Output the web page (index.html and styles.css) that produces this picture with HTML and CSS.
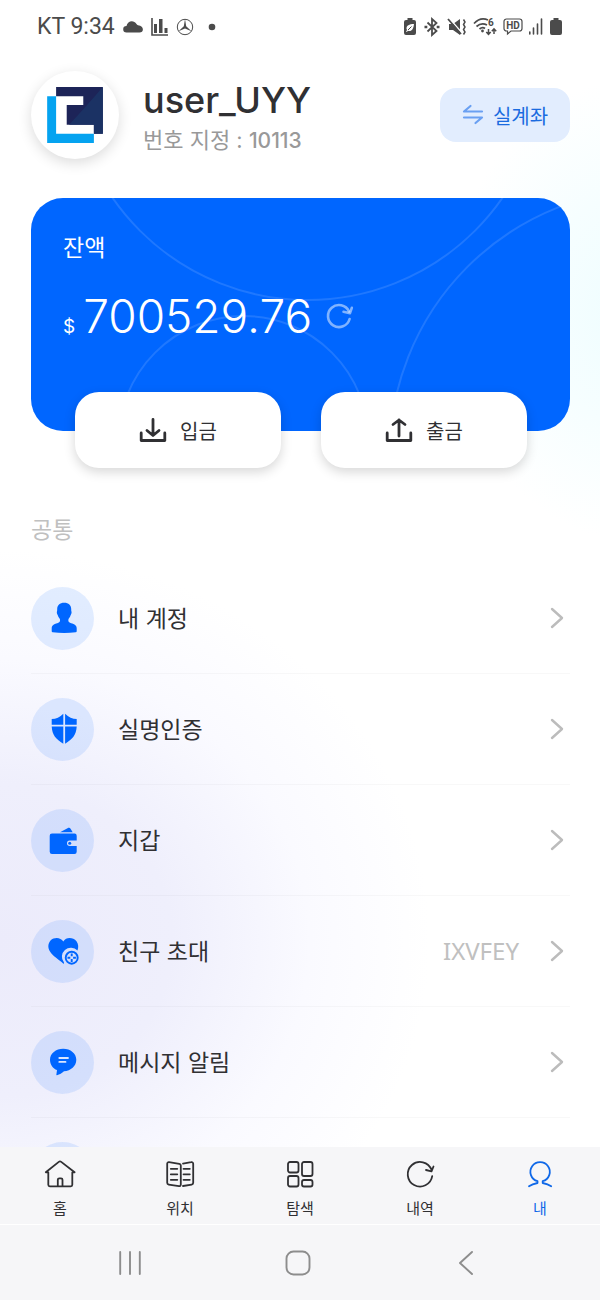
FILE: index.html
```html
<!DOCTYPE html>
<html lang="ko">
<head>
<meta charset="utf-8">
<meta name="viewport" content="width=device-width, initial-scale=1">
<title>내 계정</title>
<link rel="stylesheet" href="styles.css">
</head>
<body>
<div class="app">
  <header class="status">
    <div class="status-left">
      <span class="clock">KT 9:34</span>
      <svg width="20" height="20" viewBox="0 0 20 20" aria-hidden="true"><path fill="currentColor" d="M3.500 15.500a3.300 3.300 0 0 1 0-6.600C4.500 4 10.500 2.500 13.500 7c.4.600.8 1.100 1.500 1.300 6.500.7 6 7.200 1.500 7.200z"/></svg>
      <svg width="17" height="20" viewBox="0 0 17 20" aria-hidden="true"><path d="M1 1v17h16" fill="none" stroke="currentColor" stroke-width="1.600"/><path fill="currentColor" d="M3 7h3v9H3zM8 2h3.500v14H8zM13.500 11h3v5h-3z"/></svg>
      <svg width="18" height="20" viewBox="0 0 18 20" aria-hidden="true"><circle cx="9" cy="10" r="7.700" fill="none" stroke="currentColor" stroke-width="1"/><path fill="currentColor" d="M9 2l1.200 7.300 5.300 4.900L9 11.400l-6.500 2.800 5.300-4.900z"/></svg>
      <svg width="20" height="20" viewBox="0 0 20 20" aria-hidden="true"><circle cx="10" cy="10" r="3.300" fill="currentColor"/></svg>
    </div>
    <div class="status-right">
      <svg width="14" height="20" viewBox="0 0 14 20" aria-hidden="true"><path fill="currentColor" d="M4.500 1h5v2H11a2 2 0 0 1 2 2v11a2 2 0 0 1-2 2H3a2 2 0 0 1-2-2V5a2 2 0 0 1 2-2h1.500z"/><path fill="#fff" d="M11 7c-5 0-7.500 1.500-7.500 4.500 0 .6.200 1.200.6 1.600L3 14.500l.8.600 1.200-1.300c3.500 1.200 5.500-1.800 6-6.800z"/><path d="M5 13l3.500-3.500" stroke="currentColor" stroke-width="1"/></svg>
      <svg width="18" height="20" viewBox="0 0 18 20" aria-hidden="true" fill="none" stroke="currentColor" stroke-width="1.800"><path d="M4.500 5.500l9 8.500L9 18V2l4.500 4-9 8.500"/><path d="M1.500 10h2.800M13.700 10h2.800" stroke-width="2.400"/></svg>
      <svg width="20" height="20" viewBox="0 0 20 20" aria-hidden="true"><path fill="currentColor" d="M2 7h4l7-5v16l-7-5H2z"/><path d="M2 1l13 15" stroke="#fff" stroke-width="1.500"/><path d="M1 2l13 15" stroke="currentColor" stroke-width="1.800"/><path d="M16.500 2.500l1.500 2.500-1.500 2.500 1.500 2.500-1.500 2.500 1.500 2.500-1.500 2.500" fill="none" stroke="currentColor" stroke-width="1.500"/></svg>
      <svg width="24" height="20" viewBox="0 0 24 20" aria-hidden="true"><g fill="none" stroke="currentColor" stroke-width="1.700"><path d="M1 6.500Q7.500-.5 15 3M3.500 9.500Q8.500 5 14 8M6.500 12Q9.500 9.500 12 11.500"/><path d="M15.500 12v5M13.300 15l2.200 2.400 2.200-2.400M21 17v-5M18.800 14.200L21 11.800l2.200 2.400" stroke-width="1.500"/></g><circle cx="9.500" cy="14" r="1.400" fill="currentColor"/><text x="15" y="9" class="tiny">6</text></svg>
      <svg width="20" height="20" viewBox="0 0 20 20" aria-hidden="true"><path d="M3.500 2h13A2.500 2.500 0 0 1 19 4.500v7a2.500 2.500 0 0 1-2.500 2.500H8l-3.500 3v-3h-1A2.500 2.500 0 0 1 1 11.500v-7A2.500 2.500 0 0 1 3.500 2z" fill="none" stroke="currentColor" stroke-width="1.200"/><text x="10" y="12" text-anchor="middle" class="tiny">HD</text></svg>
      <svg width="14" height="20" viewBox="0 0 14 20" aria-hidden="true"><path d="M.8 17v-2M4.500 17v-6M8.500 17V7M12.500 17V2" stroke="currentColor" stroke-width="1.600" stroke-linecap="round"/></svg>
      <svg width="14" height="20" viewBox="0 0 14 20" aria-hidden="true"><path fill="currentColor" d="M4.500 1h5v2H11a2 2 0 0 1 2 2v11a2 2 0 0 1-2 2H3a2 2 0 0 1-2-2V5a2 2 0 0 1 2-2h1.500z"/></svg>
    </div>
  </header>

  <main class="content">
    <section class="profile">
      <div class="avatar">
        <svg width="56" height="56" viewBox="141 262 168 169" role="img" aria-label="로고">
          <path fill="#1d2458" d="M168 262h141v141h-27v-27h-82v-60h50v-26h-82z"/>
          <path fill="#1b3264" d="M309 262v141h-27v-27h-75Q255 325 309 262z"/>
          <path fill="#05a3f0" d="M141 290h27v113h114v28H141z"/>
        </svg>
      </div>
      <div class="identity">
        <h1 class="name">user_UYY</h1>
        <p class="number">번호 지정 : <span class="digits">10113</span></p>
      </div>
      <button class="switch" type="button">
        <svg width="22" height="22" viewBox="0 0 22 22" aria-hidden="true" fill="none" stroke="currentColor" stroke-width="2.200" stroke-linecap="round" stroke-linejoin="round"><path d="M8.500 2L2 7.500h18M2 13.500h18L13.500 19"/></svg>
        <span>실계좌</span>
      </button>
    </section>

    <section class="card">
      <svg class="card-lines" viewBox="0 0 540 233" preserveAspectRatio="xMidYMid slice" aria-hidden="true"><circle cx="277" cy="-135" r="237"/><circle cx="213" cy="243" r="125"/><circle cx="625" cy="257" r="266"/></svg>
      <h2 class="card-title">잔액</h2>
      <div class="balance">
        <span class="currency">$</span><span class="amount">700529.76</span>
        <button class="refresh" type="button" aria-label="새로고침">
          <svg width="32" height="32" viewBox="0 0 32 32" fill="none" stroke="currentColor" stroke-width="2.600" stroke-linecap="round" stroke-linejoin="round"><path d="M26.600 19A11 11 0 1 1 26 11.500"/><path d="M20.500 11.800l6.500 1.400 1.800-5.400"/></svg>
        </button>
      </div>
    </section>

    <div class="actions">
      <button class="action" type="button">
        <svg width="28" height="28" viewBox="0 0 28 28" aria-hidden="true" fill="none" stroke="currentColor" stroke-width="2.800" stroke-linecap="round" stroke-linejoin="round"><path d="M2.200 17v7.500h23.600V17M14 3.500V19M8 14.500l6 5 6-5"/></svg>
        <span>입금</span>
      </button>
      <button class="action" type="button">
        <svg width="28" height="28" viewBox="0 0 28 28" aria-hidden="true" fill="none" stroke="currentColor" stroke-width="2.800" stroke-linecap="round" stroke-linejoin="round"><path d="M2.200 17v7.500h23.600V17M14 20V4M8 8.500L14 4l6 4.500"/></svg>
        <span>출금</span>
      </button>
    </div>

    <h2 class="section-title">공통</h2>
    <nav class="menu" aria-label="공통">
      <a class="row" href="#account">
        <span class="chip"><svg width="32" height="32" viewBox="0 0 32 32" aria-hidden="true"><path fill="currentColor" d="M17.200.7c4.500 0 7 2.600 7 6.300 0 1 0 2 .3 2.800.4 1.700-.6 2.700-1 3.700-.6 1.800-1.300 2.700-2 3.500-.3 1.800-.3 3 1.500 3.800 3 1 6.700 2 6.700 5.400v3c0 .6-.4.900-1 1-7.500 1-15.500 1-23 0-.6-.1-1-.4-1-1v-3c0-3.400 3.700-4.400 6.700-5.400 1.800-.8 1.800-2 1.500-3.800-.7-.8-1.400-1.700-2-3.500-.4-1-1.400-2-1-3.700.3-.8.300-1.800.3-2.800 0-3.700 2.500-6.300 7-6.300z"/></svg></span>
        <span class="label">내 계정</span>
        <svg class="chevron" width="14" height="22" viewBox="0 0 14 22" aria-hidden="true"><path d="M2 2l10 9-10 9"/></svg>
      </a>
      <a class="row" href="#verify">
        <span class="chip"><svg width="32" height="32" viewBox="0 0 32 32" aria-hidden="true"><path fill="currentColor" d="M16.300.7v11H4.700V6C9 6 13 4 16.300.7zM18.100.7C21.500 4 25.500 6 29.700 6v5.700H18.100zM4.700 13.600h11.600v17.100C9 26.500 5.200 22 4.700 13.600zM18.100 13.600h11.600c-.5 8.400-4.300 12.900-11.600 17.100z"/></svg></span>
        <span class="label">실명인증</span>
        <svg class="chevron" width="14" height="22" viewBox="0 0 14 22" aria-hidden="true"><path d="M2 2l10 9-10 9"/></svg>
      </a>
      <a class="row" href="#wallet">
        <span class="chip"><svg width="32" height="32" viewBox="0 0 32 32" aria-hidden="true"><path fill="currentColor" d="M13 8.300l7.500-4c1.400-.8 2.500-.6 3.200.6l2 3.400zM5 9.500h22.500a2.200 2.200 0 0 1 2.200 2.200v4.900h-7a2.700 2.700 0 0 0 0 5.400h7v5.800a2.200 2.200 0 0 1-2.200 2.200H5a2.300 2.300 0 0 1-2.300-2.200v-16A2.300 2.300 0 0 1 5 9.500z"/><circle cx="22.700" cy="19.300" r="1.500" fill="currentColor"/></svg></span>
        <span class="label">지갑</span>
        <svg class="chevron" width="14" height="22" viewBox="0 0 14 22" aria-hidden="true"><path d="M2 2l10 9-10 9"/></svg>
      </a>
      <a class="row" href="#invite">
        <span class="chip"><svg width="32" height="32" viewBox="0 0 32 32" aria-hidden="true"><path fill="currentColor" d="M16.300 6.500C19 1.800 26 2 29.500 6.300c2 2.700 2.200 6 1 9.300A9 9 0 0 0 17 27.500l-.3 1.500C11 23.500 6 21.500 3 16.500.5 12.500 1 8.500 3.500 5.500 7.500 1.800 13.800 2.500 16.300 6.500z"/><circle cx="24.700" cy="22.700" r="6" fill="none" stroke="currentColor" stroke-width="1.900"/><path d="M24.700 18.500v2.800M24.700 24.100v2.800M20.500 22.700h2.800M26.100 22.700h2.800" stroke="currentColor" stroke-width="1.900"/></svg></span>
        <span class="label">친구 초대</span>
        <span class="code">IXVFEY</span>
        <svg class="chevron" width="14" height="22" viewBox="0 0 14 22" aria-hidden="true"><path d="M2 2l10 9-10 9"/></svg>
      </a>
      <a class="row" href="#messages">
        <span class="chip"><svg width="32" height="32" viewBox="0 0 32 32" aria-hidden="true"><path fill="currentColor" d="M16.200 2.700c7.300 0 13.100 4.700 13.100 11 0 6.500-5.500 11-12.300 11.500-2 1.700-4.500 3.300-7 4-.6.100-.8-.2-.6-.8l.6-4.300C6 22.500 3 18.500 3 13.700c0-6.300 5.900-11 13.200-11z"/><path d="M12.300 12h8.700M12.300 15.900h6.200" stroke="#dbe6ff" stroke-width="1.800" stroke-linecap="round"/></svg></span>
        <span class="label">메시지 알림</span>
        <svg class="chevron" width="14" height="22" viewBox="0 0 14 22" aria-hidden="true"><path d="M2 2l10 9-10 9"/></svg>
      </a>
      <div class="row"><span class="chip"></span></div>
    </nav>
  </main>

  <nav class="tabs" aria-label="메뉴">
    <a class="tab" href="#home">
      <svg width="32" height="32" viewBox="0 0 32 32" aria-hidden="true"><path d="M1.800 14.300h2.500v12.500a1.500 1.500 0 0 0 1.500 1.500h21a1.500 1.500 0 0 0 1.500-1.500V14.300h2.300L17.200 3.900a2 2 0 0 0-2.400 0zM13.800 28v-6.200a1.500 1.500 0 0 1 1.500-1.500h1.700a1.500 1.500 0 0 1 1.500 1.500V28"/></svg>
      <span>홈</span>
    </a>
    <a class="tab" href="#position">
      <svg width="32" height="32" viewBox="0 0 32 32" aria-hidden="true"><path d="M16.800 7.500a1.800 1.800 0 0 0-1.500-1.700L5 4.200A1.600 1.600 0 0 0 3.200 6v18.800a1.800 1.800 0 0 0 1.500 1.800L15 28.200a1.600 1.600 0 0 0 1.800-1.600zM19 5.700l8.200-1.500A1.600 1.600 0 0 1 29.200 6v18.800a1.800 1.800 0 0 1-1.500 1.800L19 28M6.800 10.800h6.500M6.800 16.300h6.500M6.800 21.800h6.500M19.500 10.800h6.300M19.500 16.300h6.300M19.500 21.800h6.300"/></svg>
      <span>위치</span>
    </a>
    <a class="tab" href="#explore">
      <svg width="32" height="32" viewBox="0 0 32 32" aria-hidden="true"><rect x="4" y="4" width="10.500" height="10.500" rx="2"/><rect x="18" y="4" width="10.500" height="14" rx="2"/><rect x="4" y="18" width="10.500" height="10.500" rx="2"/><rect x="18" y="22" width="10.500" height="6.500" rx="2"/></svg>
      <span>탐색</span>
    </a>
    <a class="tab" href="#history">
      <svg width="32" height="32" viewBox="0 0 32 32" aria-hidden="true"><path d="M28.200 18.200A12.300 12.300 0 1 1 27.500 11.700M22 12l5.500 1.300L29.500 8.500"/></svg>
      <span>내역</span>
    </a>
    <a class="tab tab-active" href="#me" aria-current="page">
      <svg width="32" height="32" viewBox="0 0 32 32" aria-hidden="true"><path d="M5 28.200c3-2 5.500-2.600 8.500-3.200v-1.800a9.700 9.700 0 1 1 5.200 0V25c3 .6 5.500 1.200 8.500 3.200"/></svg>
      <span>내</span>
    </a>
  </nav>

  <footer class="system">
    <button class="key" type="button" aria-label="최근 앱"><svg width="28" height="28" viewBox="0 0 28 28"><path d="M4.200 3v22M14 3v22M23.800 3v22"/></svg></button>
    <button class="key" type="button" aria-label="홈 화면"><svg width="28" height="28" viewBox="0 0 28 28"><rect x="2.500" y="2.500" width="23" height="23" rx="7"/></svg></button>
    <button class="key" type="button" aria-label="뒤로"><svg width="28" height="28" viewBox="0 0 28 28"><path d="M20 3L8 14l12 11"/></svg></button>
  </footer>
</div>
</body>
</html>
```

FILE: styles.css
```css
* {
  box-sizing: border-box;
}

body {
  margin: 0;
  font-family: Inter, "Noto Sans CJK KR", sans-serif;
  color: #303033;
}

h1, h2, p {
  margin: 0;
  font-weight: 400;
}

button {
  border: 0;
  padding: 0;
  background: none;
  font: inherit;
  color: inherit;
}

a {
  color: inherit;
  text-decoration: none;
}

svg {
  display: block;
  flex: none;
}

.app {
  display: flex;
  flex-direction: column;
  height: 100vh;
  background:
    radial-gradient(ellipse 180px 230px at 105% 310px, #effdff 0%, #f6feff 50%, rgba(255, 255, 255, 0) 100%),
    radial-gradient(ellipse 430px 390px at 0 940px, #ecebfb 0%, #efeffc 40%, #fafaff 72%, rgba(255, 255, 255, 0) 100%),
    #fff;
}

.status {
  display: flex;
  justify-content: space-between;
  align-items: center;
  height: 54px;
  padding: 0 37px;
  color: #4b4b4b;
}

.status-left,
.status-right {
  display: flex;
  align-items: center;
  gap: 8px;
}

.status-right {
  gap: 6px;
}

.clock {
  font: 23px/30px Roboto, sans-serif;
}

.tiny {
  font: bold 10px Roboto, sans-serif;
  fill: currentColor;
}

.content {
  flex: 1;
  min-height: 0;
  padding: 17px 30px 0 31px;
  overflow-y: auto;
  scrollbar-width: none;
}

.profile {
  display: flex;
  align-items: center;
}

.avatar {
  display: grid;
  place-items: center;
  width: 88px;
  height: 88px;
  border-radius: 50%;
  background: #fff;
  box-shadow: 0 4px 14px rgba(0, 0, 0, 0.14);
}

.identity {
  flex: 1;
  padding: 6px 0 0 24px;
}

.name {
  font-size: 36px;
  font-weight: 500;
  line-height: 44px;
}

.number {
  font-size: 22px;
  line-height: 36px;
  color: #999;
}

.digits {
  font-size: 21px;
  font-weight: 500;
}

.switch {
  display: flex;
  justify-content: center;
  align-items: center;
  gap: 9px;
  width: 130px;
  height: 54px;
  border-radius: 16px;
  background: #e2edfe;
  color: #1a6be0;
  font-size: 20px;
}

.switch svg {
  color: #6aa0f2;
}

.card {
  position: relative;
  height: 233px;
  margin-top: 39px;
  padding: 33px 32px;
  border-radius: 32px;
  background: #0066ff;
  color: #fff;
  overflow: hidden;
}

.card-lines {
  position: absolute;
  inset: 0;
  width: 100%;
  height: 100%;
  fill: none;
  stroke: rgba(255, 255, 255, 0.12);
  stroke-width: 2;
}

.card-title {
  position: relative;
  font-size: 23px;
  line-height: 34px;
}

.balance {
  position: relative;
  display: flex;
  align-items: baseline;
  margin-top: 22px;
  line-height: 58px;
}

.currency {
  margin-right: 8px;
  font-size: 19px;
}

.amount {
  font-size: 46px;
  font-weight: 300;
}

.refresh {
  align-self: flex-start;
  margin: 13px 0 0 11px;
  color: rgba(255, 255, 255, 0.5);
}

.actions {
  position: relative;
  display: flex;
  gap: 40px;
  margin-top: -39px;
  padding: 0 43px 0 44px;
}

.action {
  flex: 1;
  display: flex;
  justify-content: center;
  align-items: center;
  gap: 13px;
  height: 76px;
  border-radius: 24px;
  background: #fff;
  box-shadow: 0 4px 12px rgba(0, 0, 0, 0.16);
  font-size: 20px;
}

.section-title {
  margin-top: 45px;
  font-size: 23px;
  line-height: 34px;
  color: #c0c0c0;
}

.menu {
  margin-top: 16px;
}

.row {
  display: flex;
  align-items: center;
  height: 111px;
  padding-right: 6px;
  border-bottom: 1px solid rgba(130, 130, 130, 0.06);
}

.chip {
  display: grid;
  place-items: center;
  width: 63px;
  height: 63px;
  border-radius: 50%;
  background: rgba(0, 102, 255, 0.11);
  color: #0066ff;
}

.label {
  flex: 1;
  padding: 0 0 2px 24px;
  font-size: 23px;
}

.code {
  margin-right: 31px;
  font: 24px/34px "Noto Sans", sans-serif;
  color: #c0c0c0;
}

.chevron {
  fill: none;
  stroke: #bcbcbc;
  stroke-width: 2.400;
  stroke-linecap: round;
  stroke-linejoin: round;
}

.tabs {
  display: grid;
  grid-template-columns: repeat(5, 1fr);
  padding: 11px 0 4px;
  border-bottom: 1px solid #fff;
  background: #f6f6f8;
}

.tab {
  display: flex;
  flex-direction: column;
  align-items: center;
  gap: 7px;
  font-size: 15px;
  line-height: 23px;
}

.tab svg {
  fill: none;
  stroke: currentColor;
  stroke-width: 1.800;
  stroke-linecap: round;
  stroke-linejoin: round;
}

.tab-active {
  color: #0f68e8;
}

.system {
  display: grid;
  grid-template-columns: repeat(3, 1fr);
  height: 75px;
  padding: 0 50px 0 46px;
  background: #f6f6f8;
}

.key {
  display: grid;
  place-items: center;
}

.key svg {
  fill: none;
  stroke: #8d8d8d;
  stroke-width: 1.900;
  stroke-linecap: round;
  stroke-linejoin: round;
}
```
